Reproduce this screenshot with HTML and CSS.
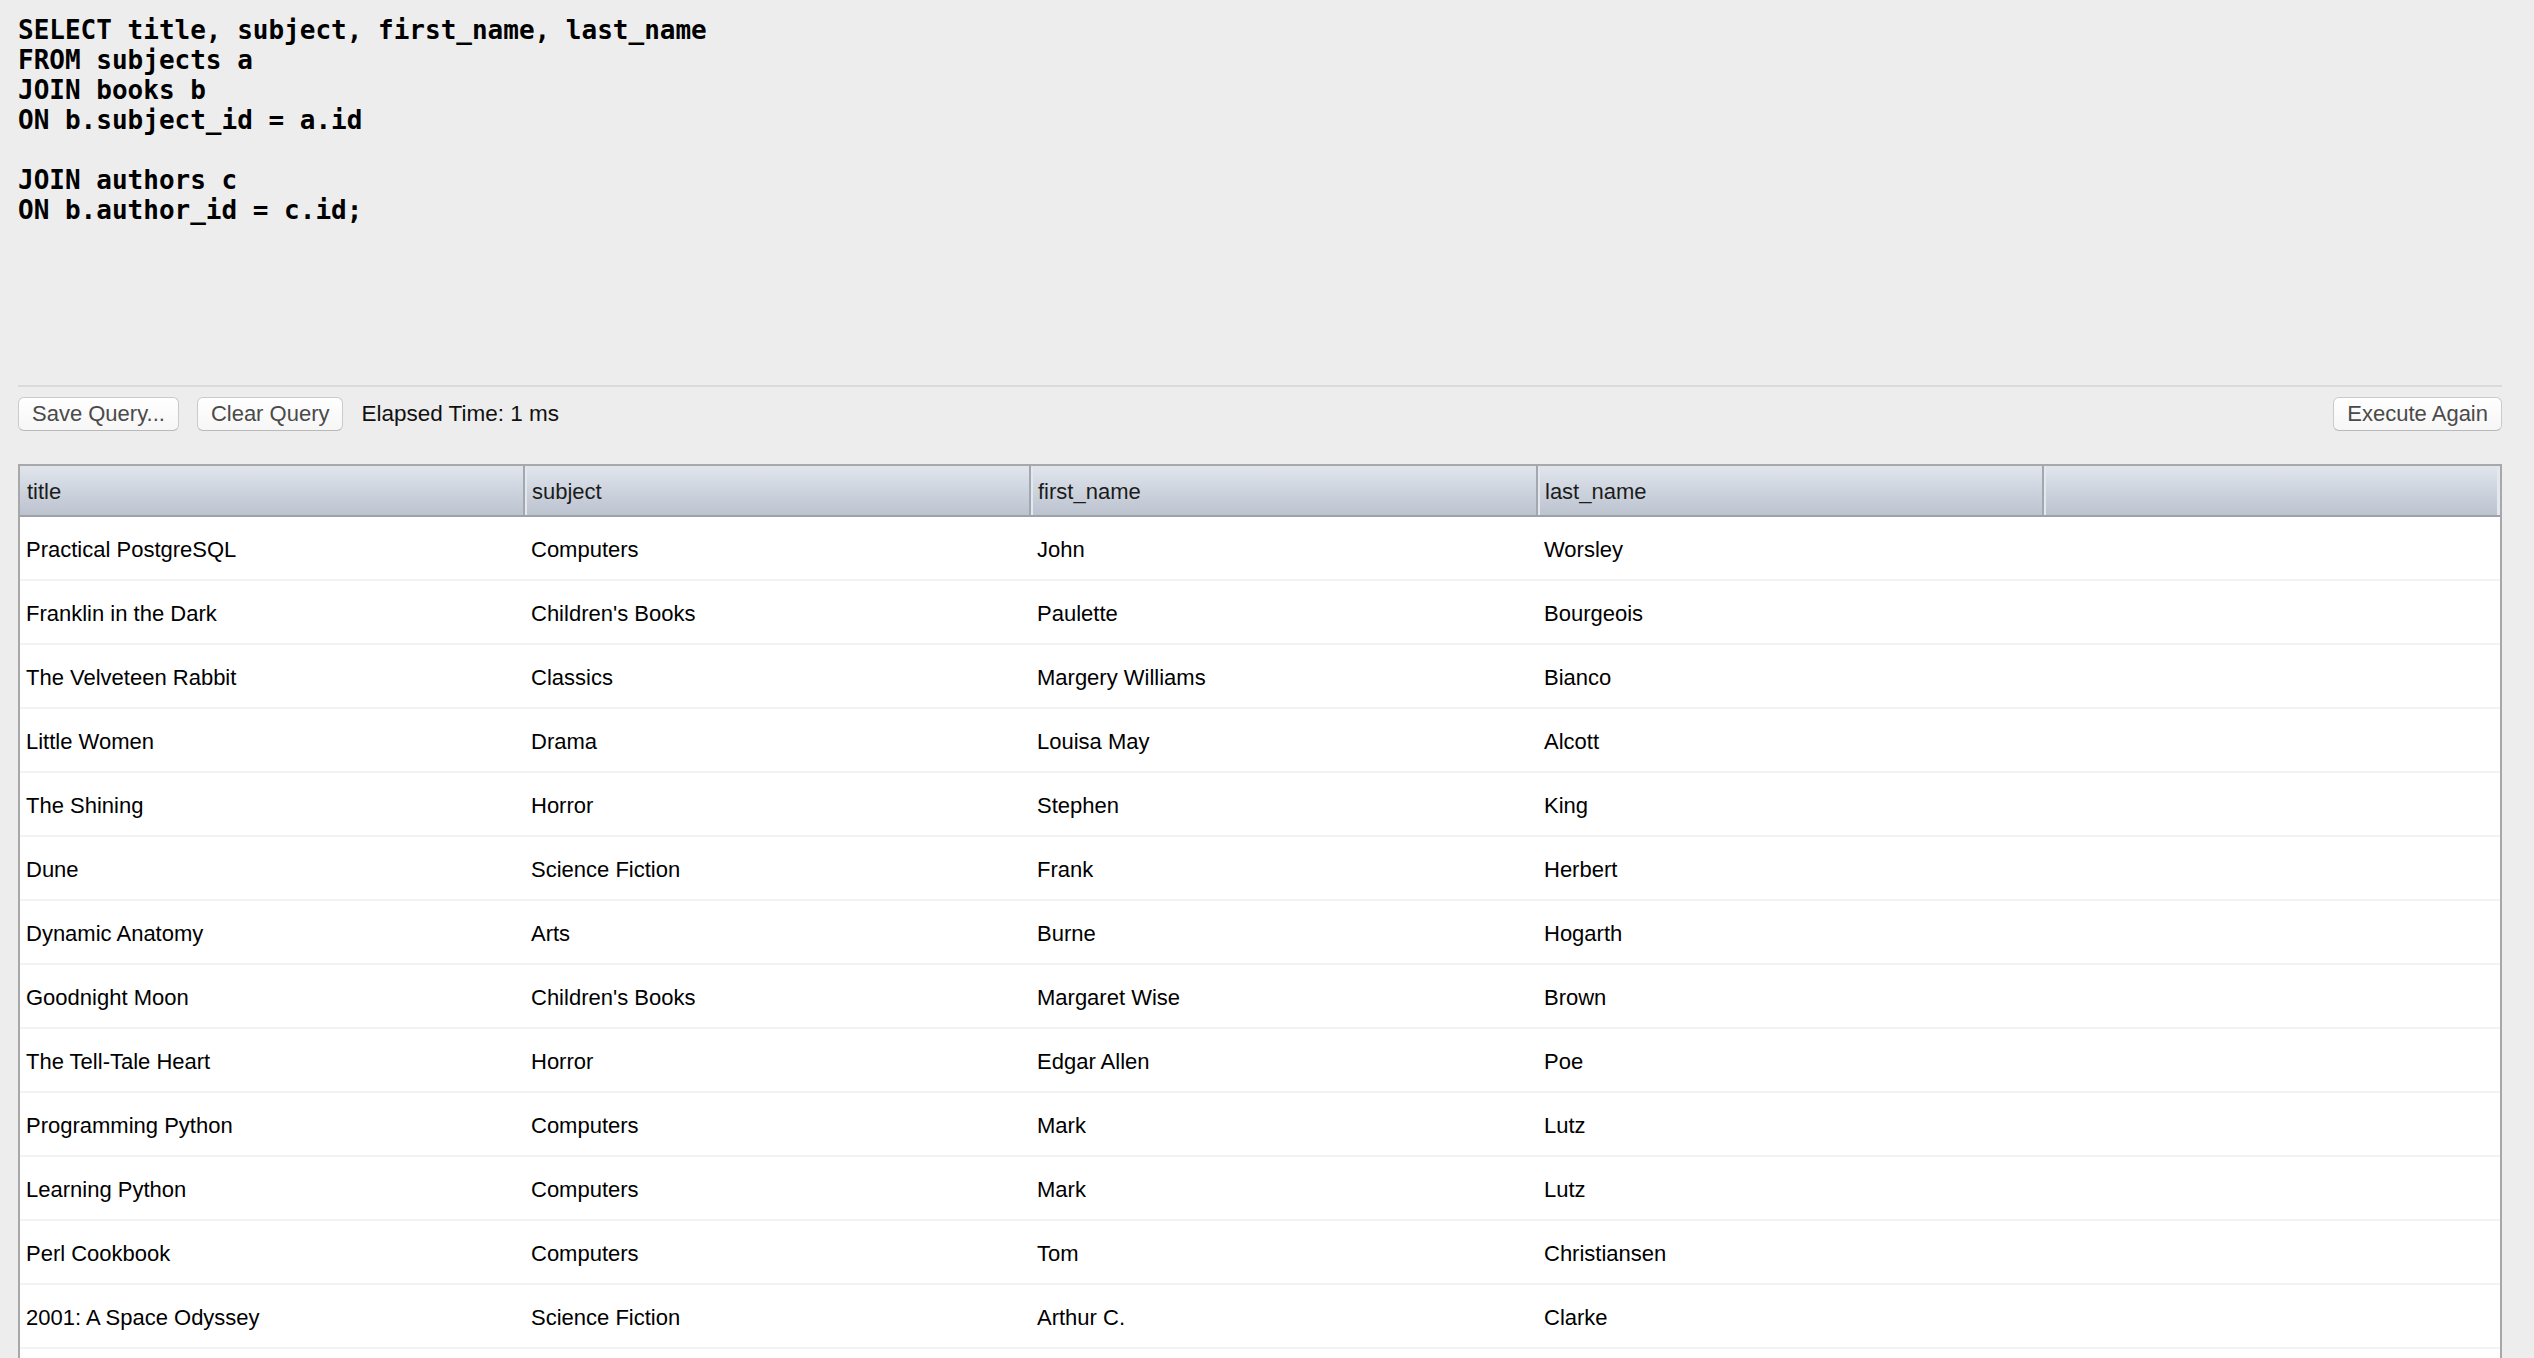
FILE: index.html
```html
<!DOCTYPE html>
<html>
<head>
<meta charset="utf-8">
<link rel="stylesheet" href="styles.css">
</head>
<body>
<div class="app">
  <pre class="editor">SELECT title, subject, first_name, last_name
FROM subjects a
JOIN books b
ON b.subject_id = a.id

JOIN authors c
ON b.author_id = c.id;</pre>
  <div class="separator"></div>
  <div class="toolbar">
    <button class="btn">Save Query...</button>
    <button class="btn">Clear Query</button>
    <span class="elapsed">Elapsed Time: 1 ms</span>
    <span class="spacer"></span>
    <button class="btn">Execute Again</button>
  </div>
  <div class="table">
    <div class="row head">
      <div class="hcell">title</div>
      <div class="hcell">subject</div>
      <div class="hcell">first_name</div>
      <div class="hcell">last_name</div>
      <div class="hcell last"></div>
    </div>
    <div class="row"><div class="cell">Practical PostgreSQL</div><div class="cell">Computers</div><div class="cell">John</div><div class="cell">Worsley</div><div class="cell"></div></div>
    <div class="row"><div class="cell">Franklin in the Dark</div><div class="cell">Children's Books</div><div class="cell">Paulette</div><div class="cell">Bourgeois</div><div class="cell"></div></div>
    <div class="row"><div class="cell">The Velveteen Rabbit</div><div class="cell">Classics</div><div class="cell">Margery Williams</div><div class="cell">Bianco</div><div class="cell"></div></div>
    <div class="row"><div class="cell">Little Women</div><div class="cell">Drama</div><div class="cell">Louisa May</div><div class="cell">Alcott</div><div class="cell"></div></div>
    <div class="row"><div class="cell">The Shining</div><div class="cell">Horror</div><div class="cell">Stephen</div><div class="cell">King</div><div class="cell"></div></div>
    <div class="row"><div class="cell">Dune</div><div class="cell">Science Fiction</div><div class="cell">Frank</div><div class="cell">Herbert</div><div class="cell"></div></div>
    <div class="row"><div class="cell">Dynamic Anatomy</div><div class="cell">Arts</div><div class="cell">Burne</div><div class="cell">Hogarth</div><div class="cell"></div></div>
    <div class="row"><div class="cell">Goodnight Moon</div><div class="cell">Children's Books</div><div class="cell">Margaret Wise</div><div class="cell">Brown</div><div class="cell"></div></div>
    <div class="row"><div class="cell">The Tell-Tale Heart</div><div class="cell">Horror</div><div class="cell">Edgar Allen</div><div class="cell">Poe</div><div class="cell"></div></div>
    <div class="row"><div class="cell">Programming Python</div><div class="cell">Computers</div><div class="cell">Mark</div><div class="cell">Lutz</div><div class="cell"></div></div>
    <div class="row"><div class="cell">Learning Python</div><div class="cell">Computers</div><div class="cell">Mark</div><div class="cell">Lutz</div><div class="cell"></div></div>
    <div class="row"><div class="cell">Perl Cookbook</div><div class="cell">Computers</div><div class="cell">Tom</div><div class="cell">Christiansen</div><div class="cell"></div></div>
    <div class="row"><div class="cell">2001: A Space Odyssey</div><div class="cell">Science Fiction</div><div class="cell">Arthur C.</div><div class="cell">Clarke</div><div class="cell"></div></div>
    <div class="row"><div class="cell"></div><div class="cell"></div><div class="cell"></div><div class="cell"></div><div class="cell"></div></div>
  </div>
</div>
</body>
</html>
```

FILE: styles.css
```css
html, body {
  margin: 0;
  padding: 0;
  height: 100%;
  overflow: hidden;
  background: #ededed;
}

.app {
  display: flex;
  flex-direction: column;
  padding: 0 32px 0 18px;
  font-family: "Liberation Sans", Arial, sans-serif;
}

.editor {
  margin: 0;
  height: 369px;
  padding-top: 15px;
  font-family: "DejaVu Sans Mono", Menlo, monospace;
  font-weight: bold;
  font-size: 26px;
  line-height: 30px;
  color: #000;
}

.separator {
  height: 2px;
  background: #dadada;
  margin-top: 1px;
}

.toolbar {
  display: flex;
  align-items: center;
  gap: 18px;
  margin-top: 10px;
  height: 34px;
}

.spacer {
  flex: 1;
}

.btn {
  height: 34px;
  padding: 0 13px;
  font-family: "Liberation Sans", Arial, sans-serif;
  font-size: 22px;
  color: #4a4a4a;
  background: linear-gradient(#ffffff, #f6f6f6);
  border: 1px solid #cbcbcb;
  border-bottom-color: #b9b9b9;
  border-radius: 6px;
  line-height: 32px;
}

.elapsed {
  font-size: 22.5px;
  color: #111;
}

.table {
  margin-top: 33px;
  border: 2px solid #a8a8a8;
  border-bottom: none;
  background: #fff;
}

.row {
  display: grid;
  grid-template-columns: 505px 506px 507px 506px 1fr;
  height: 62px;
  border-bottom: 2px solid #f2f2f2;
  align-items: center;
  font-size: 22px;
  color: #000;
}

.cell {
  padding: 4px 0 0 6px;
  white-space: nowrap;
  overflow: hidden;
}

.row.head {
  height: 49px;
  border-bottom: 2px solid #9ca1aa;
  background: linear-gradient(#e0e5ed, #bcc3cf);
  align-items: stretch;
}

.hcell {
  display: flex;
  align-items: center;
  padding: 3px 0 0 7px;
  color: #1c1c1c;
  border-right: 2px solid #a2a7b0;
  box-shadow: inset 2px 0 0 #e3e7ee;
}

.hcell:first-child {
  box-shadow: none;
}

.hcell.last {
  border-right: none;
  box-shadow: inset 2px 0 0 #e3e7ee, inset -3px 0 0 #e3e7ee;
}
```
